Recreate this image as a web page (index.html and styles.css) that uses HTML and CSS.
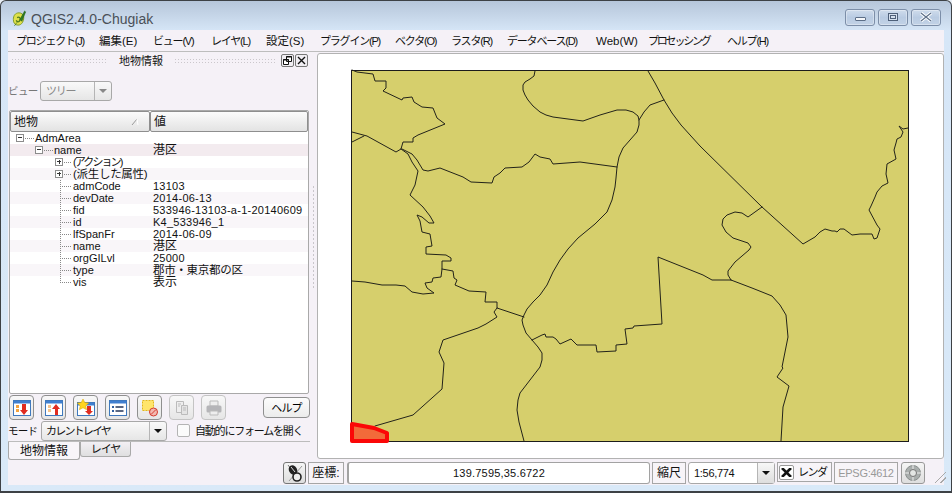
FILE: index.html
```html
<!DOCTYPE html>
<html lang="ja">
<head>
<meta charset="utf-8">
<title>QGIS2.4.0-Chugiak</title>
<link rel="stylesheet" href="styles.css">
</head>
<body>
<div class="window">
  <header class="titlebar">
    <svg class="logo" width="16" height="17" viewBox="0 0 16 18"><path d="M8 3C4 3 2 6 2 10c0 4 2 6 5 6 4 0 6-4 6-8 0-3-2-5-5-5z" fill="#dfe04a" stroke="#7f9a2a"/><path d="M6 8c2-1 4 0 3 3-1 2-3 2-4 0" fill="none" stroke="#4f7a1e" stroke-width="1.4"/><path d="M3 17l3-4M9 10l5-9 1 1-4 10z" fill="#2e7d22" stroke="#1d5a14" stroke-width=".6"/></svg>
    <span class="apptitle">QGIS2.4.0-Chugiak</span>
    <div class="winbtns">
      <button class="winbtn"><span class="g-min"></span></button>
      <button class="winbtn"><span class="g-max"></span></button>
      <button class="winbtn"><svg width="14" height="10" viewBox="0 0 14 10"><path d="M2 1l10 8M12 1L2 9" stroke="#fff" stroke-width="3.2"/><path d="M2 1l10 8M12 1L2 9" stroke="#5d6f88" stroke-width="1.2"/></svg></button>
    </div>
  </header>
  <nav class="menubar">
    <span class="kn">プロジェクト(J)</span><span>編集(E)</span><span class="kn">ビュー(V)</span><span class="kn">レイヤ(L)</span><span>設定(S)</span><span class="kn">プラグイン(P)</span><span class="kn">ベクタ(O)</span><span class="kn">ラスタ(R)</span><span class="kn">データベース(D)</span><span>Web(W)</span><span class="kn kn-tight">プロセッシング</span><span class="kn">ヘルプ(H)</span>
  </nav>
  <main class="main">
    <section class="dock">
      <div class="docktitle">
        <span class="dots"></span><span class="docklabel">地物情報</span><span class="dots dots-r"></span>
        <button class="mini"><svg width="9" height="9" viewBox="0 0 9 9"><path d="M3.5.5h5v5h-5zM.5 3.5h5v5h-5z" fill="#fff" stroke="#111"/><path d="M3 1h6M0 4h6" stroke="#111"/></svg></button>
        <button class="mini"><svg width="9" height="9" viewBox="0 0 9 9"><path d="M1 1l7 7M8 1L1 8" stroke="#111" stroke-width="1.4"/></svg></button>
      </div>
      <div class="viewrow">
        <span class="viewlabel">ビュー</span>
        <div class="combo combo-view"><span class="combotext">ツリー</span><span class="arrowcell"><i class="arrow arrow-off"></i></span></div>
      </div>
      <div class="tree">
        <div class="treehead">
          <div class="th th-a"><span>地物</span><svg width="8" height="8" viewBox="0 0 8 8"><path d="M1 7L6 1" stroke="#999"/><path d="M6 1l1 6" stroke="#fff"/></svg></div>
          <div class="th th-b">値</div>
        </div>
        <div class="row"><span class="key"><i class="pad pad-1"></i><i class="box minus"></i><i class="stub stub-1"></i>AdmArea</span></div>
        <div class="row row-hl"><span class="key"><i class="pad pad-2"></i><i class="box minus"></i><i class="stub stub-1"></i>name</span><span class="val">港区</span></div>
        <div class="row"><span class="key"><i class="pad pad-3"></i><i class="box plus"></i><i class="stub stub-2"></i><span class="knkey">(アクション)</span></span></div>
        <div class="row row-alt"><span class="key"><i class="pad pad-3"></i><i class="box plus"></i><i class="stub stub-2"></i><span class="cjkkey">(派生した属性)</span></span></div>
        <div class="row"><span class="key"><i class="pad pad-4"></i><i class="twig"></i>admCode</span><span class="val num">13103</span></div>
        <div class="row row-alt"><span class="key"><i class="pad pad-4"></i><i class="twig"></i>devDate</span><span class="val num">2014-06-13</span></div>
        <div class="row"><span class="key"><i class="pad pad-4"></i><i class="twig"></i>fid</span><span class="val num">533946-13103-a-1-20140609</span></div>
        <div class="row row-alt"><span class="key"><i class="pad pad-4"></i><i class="twig"></i>id</span><span class="val num">K4_533946_1</span></div>
        <div class="row"><span class="key"><i class="pad pad-4"></i><i class="twig"></i>lfSpanFr</span><span class="val num">2014-06-09</span></div>
        <div class="row row-alt"><span class="key"><i class="pad pad-4"></i><i class="twig"></i>name</span><span class="val">港区</span></div>
        <div class="row"><span class="key"><i class="pad pad-4"></i><i class="twig"></i>orgGILvl</span><span class="val num">25000</span></div>
        <div class="row row-alt"><span class="key"><i class="pad pad-4"></i><i class="twig"></i>type</span><span class="val val-type">郡市・東京都の区</span></div>
        <div class="row"><span class="key"><i class="pad pad-4"></i><i class="twig twig-last"></i>vis</span><span class="val">表示</span></div>
      </div>
      <div class="tools">
        <button class="tool"><svg width="18" height="18" viewBox="0 0 18 18"><rect x=".5" y="1.5" width="17" height="15" fill="#fff" stroke="#3f78bd"/><rect x="1" y="2" width="16" height="2.5" fill="#3f7fd0"/><path d="M3 6h3v3H3zM3 10h3v3H3z" fill="#f5a33c"/><path d="M9 5h4v6h2l-4 5-4-5h2z" fill="#e02c20"/></svg></button>
        <button class="tool"><svg width="18" height="18" viewBox="0 0 18 18"><rect x=".5" y="1.5" width="17" height="15" fill="#fff" stroke="#3f78bd"/><rect x="1" y="2" width="16" height="2.5" fill="#3f7fd0"/><path d="M3 6h3v3H3zM3 10h3v3H3z" fill="#f5c48c"/><path d="M10 16V10H7l4-5 4 5h-2v6z" fill="#e02c20"/></svg></button>
        <button class="tool"><svg width="18" height="18" viewBox="0 0 18 18"><rect x=".5" y="3.5" width="17" height="13" fill="#fff" stroke="#3f78bd"/><rect x="1" y="4" width="16" height="2.5" fill="#3f7fd0"/><path d="M10 7h4v5h2l-4 4-4-4h2z" fill="#e02c20"/><path d="M6 0l1.8 3.6 3.9.5-2.9 2.7.8 3.9L6 8.8l-3.6 1.9.8-3.9L.3 4.1l3.9-.5z" fill="#ffd51e" stroke="#d8a400" stroke-width=".5"/></svg></button>
        <button class="tool"><svg width="18" height="18" viewBox="0 0 18 18"><rect x=".5" y="1.5" width="17" height="15" fill="#fff" stroke="#3f78bd"/><rect x="1" y="2" width="16" height="2.5" fill="#3f7fd0"/><path d="M3 7h2v2H3zM3 11h2v2H3z" fill="#2f5f9f"/><path d="M6.5 8h8M6.5 12h8" stroke="#23365a" stroke-width="1.6"/></svg></button>
        <button class="tool"><svg width="18" height="18" viewBox="0 0 18 18"><rect x="1.5" y="1.5" width="11" height="10" fill="#ffe56b" stroke="#e2b71a" stroke-dasharray="2 1"/><circle cx="12.5" cy="13" r="4" fill="#f3b9b0" stroke="#d53a2e"/><path d="M10 15.5l5-5" stroke="#d53a2e"/></svg></button>
        <button class="tool" disabled><svg width="18" height="18" viewBox="0 0 18 18"><path d="M3.5 2.5h7v11h-7z" fill="#eee" stroke="#bbb"/><path d="M8.5 6.5h6v9h-6z" fill="#e4e4e4" stroke="#bbb"/><path d="M5 5h3M5 7h2M10 9h3M10 11h3" stroke="#bbb"/></svg></button>
        <button class="tool" disabled><svg width="18" height="18" viewBox="0 0 18 18"><path d="M5 2h8v5H5z" fill="#eee" stroke="#bbb"/><rect x="1.5" y="6.5" width="15" height="7" rx="1.5" fill="#b5b5b8"/><path d="M5 12h8v4H5z" fill="#eee" stroke="#bbb"/></svg></button>
        <button class="helpbtn">ヘルプ</button>
      </div>
      <div class="moderow">
        <span class="modelabel">モード</span>
        <div class="combo combo-mode"><span class="combotext">カレントレイヤ</span><span class="arrowcell"><i class="arrow"></i></span></div>
        <span class="check"></span>
        <span class="autolabel">自動的にフォームを開く</span>
      </div>
      <div class="tabs">
        <span class="tab tab-on">地物情報</span><span class="tab tab-off">レイヤ</span>
      </div>
    </section>
    <div class="splitter"></div>
    <section class="canvas">
      <svg class="map" viewBox="318 54 625 404" width="625" height="404">
        <rect x="351.5" y="70.5" width="557" height="371" fill="#d6cf6c" stroke="#1c1c1c"/>
        <g fill="none" stroke="#23231a" stroke-width="1" stroke-linejoin="round" stroke-linecap="round">
          <path d="M352 70 357 72 373 74 375 81 386 81 386 88 383 91 402 100 403 98 412 97 414 102 422 107 433 108 437 118 445 124 418 135 413 138 413 142 403 142 401 149 396 152 367 136 352 132"/>
          <path d="M352 142 364 136"/>
          <path d="M401 149 408 154 412 162 418 171 415 185 410 195 423 207 430 216 434 223 429 223 422 217 417 215 420 221 422 232 430 234 432 246 426 247 426 254 446 255 451 258 451 261 442 261 442 269 441 277 433 278 432 282 425 283 427 288 434 293 423 294 412 292 405 286 396 285 382 285 365 282 352 281"/>
          <path d="M442 269 453 271 454 278 457 280 455 285 469 291 486 292 485 302 497 302 497 308 524 317"/>
          <path d="M497 308 494 312 497 317 486 324 478 328 443 340 439 352 444 363 442 389 413 415 375 426"/>
          <path d="M402 149 412 154 417 160 423 170 428 171 440 168 463 177 471 182 492 183 494 177 500 173 505 168 522 167 529 162 535 154 540 157 550 159 553 164 580 162 617 167"/>
          <path d="M535 71 534 76 530 79 525 82 523 85 523 90 525 95 528 100 533 106 540 112 546 115 553 117 568 119 583 121 600 115 617 110 626 110 633 112 638 116 639 120 639 125 637 132 630 140 623 148 619 157 617 167 616 178 615 187 612 200 607 212 595 224 578 238 568 249 560 260 553 272 547 285 540 295 533 302 527 309 524 315 522 320 523 325 526 333 532 340 538 347 542 353 542 360 540 367 530 380 520 393 518 400 517 410 519 422 524 441"/>
          <path d="M532 340 542 335 545 334 546 337 553 337 556 339 560 344 571 339 577 345 596 345 597 352 616 351 616 345 627 344 625 329 633 328 634 326 662 324 658 257 703 275 712 280 731 280"/>
          <path d="M731 280 728 275 728 271 735 262 749 250 751 247 748 243 733 238 726 232 722 225 723 219 727 215 735 212 742 213 748 217 762 207"/>
          <path d="M731 280 752 288 772 296 780 305 786 315 788 337 782 367 783 368 777 377 789 386 785 400 783 407 781 441"/>
          <path d="M648 71 655 83 664 100 672 113 681 125 700 146 762 207 803 244 815 237 820 232 825 229 832 231 835 231 837 232 840 229 844 229 852 235 860 234 872 234 874 239 877 238 880 229 877 225 869 210 871 206 875 197 877 192 882 186 888 183 886 174 887 164 896 159 894 150 896 143 897 139 901 137 903 132 899 126 903 129 908 128"/>
          <path d="M664 100 650 105 644 112 639 120"/>
        </g>
        <path d="M352 424 374 428 387 433 387 441 352 441Z" fill="#f26a3a" stroke="#fb0707" stroke-width="4" stroke-linejoin="round"/>
      </svg>
    </section>
  </main>
  <footer class="status">
    <button class="stbtn st-mouse"><svg width="18" height="19" viewBox="0 0 18 19"><path d="M2 1l12 16" stroke="#777"/><path d="M16 2L3 17" stroke="#999"/><ellipse cx="7" cy="6" rx="4" ry="5" transform="rotate(-30 7 6)" fill="#222"/><path d="M5 3l4 5" stroke="#ddd"/><circle cx="11" cy="13" r="4" fill="#eee" stroke="#222" stroke-width="1.6"/></svg></button>
    <span class="stbox st-coordlabel">座標:</span>
    <span class="st-coord">139.7595,35.6722</span>
    <span class="stbox st-scalelabel">縮尺</span>
    <div class="combo combo-scale"><span class="combotext">1:56,774</span><span class="arrowcell"><i class="arrow"></i></span></div>
    <span class="stbox st-render"><i class="xbox"><svg width="11" height="9" viewBox="0 0 11 9"><path d="M1 0l9 9M10 0L1 9" stroke="#111" stroke-width="2.6"/></svg></i>レンダ</span>
    <span class="stbox st-epsg">EPSG:4612</span>
    <button class="stbtn st-proj"><svg width="18" height="18" viewBox="0 0 18 18"><circle cx="9" cy="9" r="7.5" fill="#a9aead" stroke="#8a8f8e"/><circle cx="9" cy="9" r="3.5" fill="#e3e6e4" stroke="#777"/><path d="M9 1v4M9 13v4M1 9h4M13 9h4" stroke="#eee"/></svg></button>
    <span class="grip"></span>
  </footer>
</div>
</body>
</html>
```
FILE: styles.css
```css
* { box-sizing: border-box; }
html, body { margin: 0; padding: 0; background: #e8eef6; }
body {
  width: 952px;
  height: 493px;
  overflow: hidden;
  font-family: "Liberation Sans", "Noto Sans CJK JP", sans-serif;
  font-size: 12px;
  line-height: 14px;
  color: #111;
}
button { font: inherit; padding: 0; margin: 0; }
i { font-style: normal; display: block; flex: none; }

.window {
  width: 952px;
  height: 493px;
  border: 1px solid #3d4145;
  border-bottom-width: 2px;
  border-radius: 6px 6px 0 0;
  padding: 0 7px 6px 7px;
  background: linear-gradient(#b6c6da 0, #d6e6f7 30px, #d9e9f8 100%);
  display: flex;
  flex-direction: column;
}

.titlebar { height: 29px; flex: none; display: flex; align-items: center; padding-left: 3px; }
.logo { margin-right: 4px; margin-top: 6px; }
.apptitle { font-size: 14px; color: #4a5058; margin-top: 7px; }
.winbtns { margin-left: auto; display: flex; gap: 3px; margin-right: 3px; margin-top: 3px; }
.winbtn {
  width: 30px; height: 17px;
  border: 1px solid #7c8ea8;
  border-radius: 3px;
  background: linear-gradient(#cfdcec, #b9cbe2 50%, #c2d2e6);
  box-shadow: inset 0 0 0 1px rgba(255,255,255,.35);
  display: flex; align-items: center; justify-content: center;
}
.g-min { display: block; width: 11px; height: 4px; background: #f4f6f9; border: 1px solid #5d6f88; border-radius: 1px; margin-top: 4px; }
.g-max { display: block; width: 10px; height: 8px; background: #d5e0ee; border: 1px solid #4f6079; box-shadow: inset 0 0 0 1px #d5e0ee, inset 0 0 0 2px #4f6079; }

.menubar {
  height: 21px;
  flex: none;
  background: #f5f1f7;
  display: grid;
  grid-template-columns: 83px 54px 58px 55px 54px 75px 56px 56px 89px 52px 79px 60px;
  padding-left: 8px;
  align-items: center;
  white-space: nowrap;
  font-size: 11.5px;
}
.kn { letter-spacing: -1.2px; font-size: 11px; }
.kn-tight { letter-spacing: -2.2px; }

.main {
  flex: none;
  height: 410px;
  display: flex;
  background: #f5f1f7;
  border-top: 1px solid #bdbdbd;
}

.dock { width: 303px; flex: none; padding: 1px 0 0 1px; display: flex; flex-direction: column; }
.docktitle { height: 15px; flex: none; display: flex; align-items: center; padding-left: 2px; }
.dots {
  width: 97px;
  height: 5px;
  background-image: radial-gradient(circle, #cbc7cc 0.9px, transparent 1px);
  background-size: 3px 3px;
}
.dots-r { width: 103px; margin-right: 4px; }
.docklabel { width: 66px; text-align: center; font-size: 11px; }
.mini {
  width: 13px; height: 13px;
  border: 1px solid #777;
  border-radius: 2px;
  background: #f1eef3;
  margin-right: 1px;
  display: flex; align-items: center; justify-content: center;
}

.viewrow { margin-top: 13px; height: 20px; flex: none; display: flex; align-items: center; }
.viewlabel { width: 32px; margin-left: -1px; color: #777; font-size: 10.5px; letter-spacing: -.6px; }
.combo {
  height: 20px;
  flex: none;
  border: 1px solid #a8a8a8;
  border-radius: 3px;
  background: linear-gradient(#f9f9f9, #e6e6e6);
  display: flex;
  align-items: center;
}
.combotext { flex: 1; min-width: 0; padding-left: 5px; white-space: nowrap; }
.arrowcell { width: 17px; height: 100%; flex: none; border-left: 1px solid #b5b5b5; display: flex; align-items: center; justify-content: center; }
.arrow { width: 0; height: 0; border-left: 4px solid transparent; border-right: 4px solid transparent; border-top: 4px solid #111; }
.arrow-off { border-top-color: #888; }
.combo-view { width: 72px; }
.combo-view .combotext { color: #888; font-size: 11px; letter-spacing: -1.2px; }

.tree {
  margin-top: 9px;
  width: 300px;
  height: 284px;
  flex: none;
  border: 1px solid #a9a9a9;
  border-radius: 2px;
  background: #fff;
  overflow: hidden;
}
.treehead { height: 21px; display: flex; }
.th {
  height: 21px;
  border: 1px solid #8e8e8e;
  border-radius: 2px;
  background: linear-gradient(#fbfbfb, #e3e3e3);
  display: flex;
  align-items: center;
  padding-left: 3px;
}
.th-a { width: 140px; justify-content: space-between; padding-right: 10px; }
.th-b { flex: 1; }

.row { height: 12px; display: flex; white-space: nowrap; line-height: 12px; font-size: 11px; }
.row-hl { background: #f3ebef; }
.row-alt { background: #f9f6f9; }
.key { width: 143px; display: flex; align-items: center; flex: none; }
.knkey { font-size: 11px; letter-spacing: -1.9px; }
.cjkkey { font-size: 11.5px; letter-spacing: -.3px; }
.val { font-size: 12px; }
.val-type { font-size: 11.5px; letter-spacing: -.3px; }
.num { font-size: 11px; letter-spacing: .25px; }

.pad-1 { width: 6px; }
.pad-2 { width: 25px; }
.pad-3 { width: 45px; }
.pad-4 { width: 50px; }
.box { width: 8px; height: 8px; border: 1px solid #8c8c8c; background: #fff; margin-right: 1px; }
.box::before { content: ""; display: block; margin: 2px 1px 0; height: 1px; background: #333; }
.plus { background: linear-gradient(#333, #333) center / 1px 4px no-repeat, #fff; }
.stub { height: 1px; background: repeating-linear-gradient(90deg, #888 0 1px, transparent 1px 2px); margin-right: 1px; }
.stub-1 { width: 9px; }
.stub-2 { width: 8px; }
.twig {
  width: 13px;
  height: 12px;
  background-image:
    repeating-linear-gradient(#888 0 1px, transparent 1px 2px),
    repeating-linear-gradient(90deg, #888 0 1px, transparent 1px 2px);
  background-size: 1px 12px, 12px 1px;
  background-position: 0 0, 0 6px;
  background-repeat: no-repeat;
}
.twig-last { background-size: 1px 7px, 12px 1px; }

.tools { height: 25px; margin-top: 1px; flex: none; display: flex; gap: 7px; align-items: flex-start; }
.tool {
  width: 25px; height: 25px;
  border: 1px solid #8f8f8f;
  border-radius: 4px;
  background: linear-gradient(#f8f8f8, #e6e6e6);
  display: flex; align-items: center; justify-content: center;
}
.tool:disabled { border-color: #c4c4c4; }
.helpbtn {
  width: 47px; height: 21px;
  margin: 2px 0 0 30px;
  border: 1px solid #8f8f8f;
  border-radius: 4px;
  background: linear-gradient(#fcfcfc, #ececec);
  font-size: 11px;
  letter-spacing: -.8px;
}

.moderow { height: 21px; flex: none; display: flex; align-items: center; }
.modelabel { width: 33px; margin-left: -1px; font-size: 10.5px; letter-spacing: -.8px; }
.combo-mode { width: 126px; }
.combo-mode .combotext { font-size: 11px; letter-spacing: -1.8px; padding-left: 4px; }
.check { width: 13px; height: 13px; margin-left: 10px; border: 1px solid #b4b4b4; border-radius: 2px; background: #fbfbfb; flex: none; }
.autolabel { margin-left: 5px; font-size: 11px; letter-spacing: -1.2px; white-space: nowrap; }

.tabs { height: 18px; flex: none; width: 302px; border-top: 1px solid #bcbcbc; display: flex; align-items: flex-start; margin-left: -1px; }
.tab { display: flex; align-items: center; justify-content: center; border: 1px solid #a9a9a9; border-top: 0; border-radius: 0 0 3px 3px; }
.tab-on { width: 72px; height: 18px; background: #f8f5f9; }
.tab-off { width: 51px; height: 15px; background: linear-gradient(#f3f0f4, #dfdfe0); font-size: 11px; letter-spacing: -1px; }

.splitter {
  width: 6px;
  height: 105px;
  margin: 133px 0 0 0;
  flex: none;
  background-image: radial-gradient(circle, #c9c6cb .9px, transparent 1px);
  background-size: 3px 4px;
  background-position: 1px 0;
  background-repeat: repeat-y;
}

.canvas {
  width: 627px;
  height: 406px;
  margin-top: 1px;
  flex: none;
  border: 1px solid #b2b2b2;
  border-radius: 3px;
  background: #fff;
  overflow: hidden;
}
.map { display: block; }

.status { height: 24px; flex: none; display: flex; gap: 2px; padding: 1px 0 0 275px; background: #f5f1f7; align-items: flex-start; }
.stbtn { width: 23px; height: 22px; border: 1px solid #777; border-radius: 3px; background: linear-gradient(#f5f5f5, #dedede); display: flex; align-items: center; justify-content: center; flex: none; }
.stbox { height: 22px; border: 1px solid #a6a6a6; display: flex; align-items: center; justify-content: center; white-space: nowrap; background: #f7f4f8; flex: none; }
.st-coordlabel { width: 36px; }
.st-coord { width: 303px; height: 22px; margin-left: 1px; border: 1px solid #a2a2a2; border-left-width: 2px; border-radius: 3px; background: #fff; font-size: 11px; letter-spacing: .2px; display: flex; align-items: center; justify-content: center; flex: none; }
.st-scalelabel { width: 34px; }
.combo-scale { width: 87px; height: 22px; background: #fff; }
.combo-scale .combotext { font-size: 11px; letter-spacing: -.3px; }
.combo-scale .arrowcell { background: linear-gradient(#f7f7f7, #dedede); }
.st-render { width: 55px; gap: 4px; letter-spacing: -1.5px; font-size: 11px; justify-content: flex-start; padding-left: 1px; height: 20px; }
.xbox { width: 15px; height: 15px; border: 1px solid #999; background: #fff; display: flex; align-items: center; justify-content: center; border-radius: 2px; }
.st-epsg { width: 64px; color: #999; font-size: 11px; letter-spacing: -.3px; }
.st-proj { width: 24px; margin-left: 1px; border-color: #999; }
.grip {
  width: 13px; height: 13px;
  margin: 8px 0 0 6px;
  flex: none;
  background: repeating-linear-gradient(135deg, transparent 0 2px, #a9a9a9 2px 3px, transparent 3px 4px);
  clip-path: polygon(100% 0, 100% 100%, 0 100%);
}
```
